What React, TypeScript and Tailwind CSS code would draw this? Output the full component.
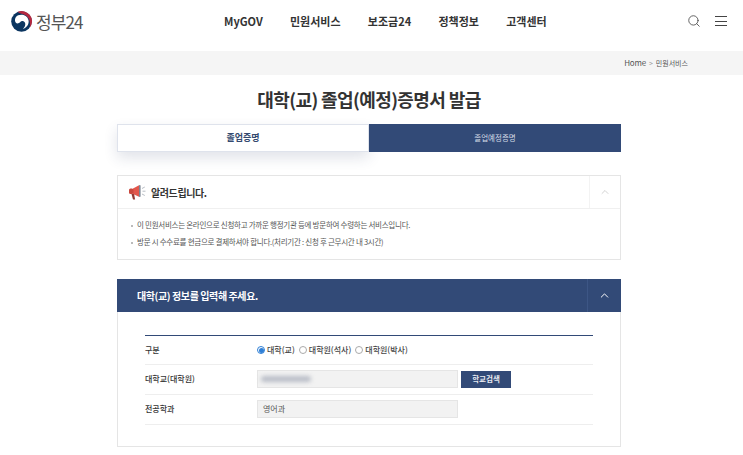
import React from 'react';
import { ChevronUp, Search } from 'lucide-react';

const font = "font-['Noto_Sans_CJK_KR','Noto_Sans',sans-serif]";

const navItems = ['MyGOV', '민원서비스', '보조금24', '정책정보', '고객센터'];

const Logo = () => (
  <svg width="21" height="21" viewBox="0 0 22 22">
    <circle cx="11" cy="11" r="10.8" fill="#0b3560" />
    <path d="M7 .9A10.8 10.8 0 0 1 19.5 17.8C21 12 19 5.5 13 3.5 10.5 2.7 8.5 2.5 7 .9z" fill="#b5283f" />
    <path d="M5 6.5C8 2.8 16.5 2.8 18.3 9.5 19.4 14 16 18 12.5 18.8 15.6 16.4 16 11.4 12.4 10.6 9.8 10.2 9.6 13 6.8 13 4.2 13 3.4 8.8 5 6.5z" fill="#fff" />
  </svg>
);

const Megaphone = () => (
  <svg width="18" height="17" viewBox="0 0 18 17">
    <path d="M5 4.5 11.5 1v12L5 10z" fill="#e2574c" />
    <rect x="1" y="4.5" width="4.5" height="5.5" rx="1.5" fill="#c9483e" />
    <path d="M3.5 10h2.6l1 5.5H5z" fill="#8f3a34" />
    <rect x="11" y="1" width="1.6" height="12" rx=".8" fill="#7d8794" />
    <path d="M14 4.5 16.8 3M14.5 7.2h3M14 10l2.8 1.5" stroke="#b9bec5" strokeWidth="1" fill="none" />
  </svg>
);

const Radio = ({ label, checked }: { label: string; checked?: boolean }) => (
  <label className="flex items-center gap-[2px]">
    <span className={`flex h-[8px] w-[8px] items-center justify-center rounded-full border ${checked ? 'border-[#2f7fd6]' : 'border-[#aaa]'} bg-white`}>
      {checked && <span className="h-[5px] w-[5px] shrink-0 rounded-full bg-[#2f7fd6]" />}
    </span>
    <span>{label}</span>
  </label>
);

const Row = ({ label, children, first }: { label: string; children: React.ReactNode; first?: boolean }) => (
  <div className={`flex items-center border-b border-[#eeeeee] ${first ? 'h-[29px]' : 'h-[30px] pb-px'}`}>
    <div className="w-[112px] text-[8px] font-medium text-[#333]">{label}</div>
    {children}
  </div>
);

const Bullet = () => <span className="mr-[4px] inline-block h-[2px] w-[2px] bg-[#bbb] align-middle" />;

export default function App() {
  return (
    <div className={`h-[455px] w-[743px] overflow-hidden bg-white ${font}`}>
      {/* header */}
      <header className="relative flex h-[51px] items-center pb-[9px]">
        <div className="ml-[11px] flex items-center">
          <Logo />
          <span className="ml-[4px] text-[17px] leading-none tracking-[-0.9px] text-[#555]">정부24</span>
        </div>
        <nav className="absolute left-[224px] top-[14px] flex gap-[27.25px] text-[11px] font-bold leading-[14px] text-[#333]">
          {navItems.map((item) => (
            <span key={item}>{item}</span>
          ))}
        </nav>
        <div className="ml-auto mr-[16px] flex items-center gap-[14px] text-[#444]">
          <Search size={14} strokeWidth={1.4} />
          <div className="flex w-[12px] flex-col gap-[3.5px]">
            <span className="h-px bg-[#444]" />
            <span className="h-px bg-[#444]" />
            <span className="h-px bg-[#444]" />
          </div>
        </div>
      </header>

      {/* breadcrumb */}
      <div className="flex h-[24px] items-center justify-end gap-[3px] bg-[#f5f5f5] pr-[55px] text-[7px] text-[#555]">
        <span className="text-[8px] tracking-[-0.2px]">Home</span>
        <span className="text-[#999]">&gt;</span>
        <span>민원서비스</span>
      </div>

      <main className="ml-[117px] w-[504px]">
        <h1 className="mt-[11px] text-center text-[18px] font-bold leading-[26px] tracking-[-0.6px] text-[#333]">대학(교) 졸업(예정)증명서 발급</h1>

        {/* tabs */}
        <div className="mt-[12px] flex h-[28px]">
          <div className="flex w-[252px] items-center justify-center border border-[#dfe3ec] bg-white text-[9px] font-bold text-[#34496f] shadow-[0_6px_14px_rgba(40,60,100,0.14)]">졸업증명</div>
          <div className="flex w-[252px] items-center justify-center bg-[#324a77] text-[7.5px] text-[#d5dbe6]">졸업예정증명</div>
        </div>

        {/* notice */}
        <section className="mt-[23px] h-[85px] border border-[#e5e5e5]">
          <div className="flex h-[33px] items-center border-b border-[#f0f0f0] pl-[10px]">
            <Megaphone />
            <span className="ml-[5px] text-[10px] font-bold tracking-[-0.4px] text-[#333]">알려드립니다.</span>
            <div className="ml-auto flex h-full w-[31px] items-center justify-center border-l border-[#f3f3f3] text-[#bbb]">
              <ChevronUp size={12} strokeWidth={1.3} />
            </div>
          </div>
          <ul className="mt-[11px] space-y-[8px] pl-[13px] text-[7.5px] leading-[9px] tracking-[-0.27px] text-[#555]">
            <li><Bullet />이 민원서비스는 온라인으로 신청하고 가까운 행정기관 등에 방문하여 수령하는 서비스입니다.</li>
            <li><Bullet />방문 시 수수료를 현금으로 결제하셔야 합니다.(처리기간 : 신청 후 근무시간 내 3시간)</li>
          </ul>
        </section>

        {/* form */}
        <section className="mt-[19px] h-[168px] border border-t-0 border-[#e5e5e5]">
          <div className="-mx-px flex h-[33px] items-center bg-[#324a77] pl-[20px]">
            <span className="-mt-px text-[10px] font-bold tracking-[-0.4px] text-white">대학(교) 정보를 입력해 주세요.</span>
            <div className="ml-auto flex h-full w-[34px] items-center justify-center border-l border-[#3d5685] text-white">
              <ChevronUp size={13} strokeWidth={1.8} />
            </div>
          </div>
          <div className="mx-[27px] mt-[23px] border-t border-[#324a77]">
            <Row label="구분" first>
              <div className="flex items-center gap-[4px] text-[8px] font-medium text-[#444]">
                <Radio label="대학(교)" checked />
                <Radio label="대학원(석사)" />
                <Radio label="대학원(박사)" />
              </div>
            </Row>
            <Row label="대학교(대학원)">
              <div className="flex h-[18px] w-[201px] items-center border border-[#e5e5e5] bg-[#f2f2f2] pl-[3px]">
                <div className="h-[6px] w-[50px] rounded-full bg-[#b9bdc7] blur-[2px]" />
              </div>
              <button className="ml-[3px] flex h-[17px] w-[50px] items-center justify-center bg-[#324a77] text-[7.5px] font-bold text-[#e8ebf1]">학교검색</button>
            </Row>
            <Row label="전공학과">
              <div className="flex h-[18px] w-[201px] items-center border border-[#e5e5e5] bg-[#f2f2f2] pl-[5px] text-[8px] text-[#555]">영어과</div>
            </Row>
          </div>
        </section>
      </main>
    </div>
  );
}
